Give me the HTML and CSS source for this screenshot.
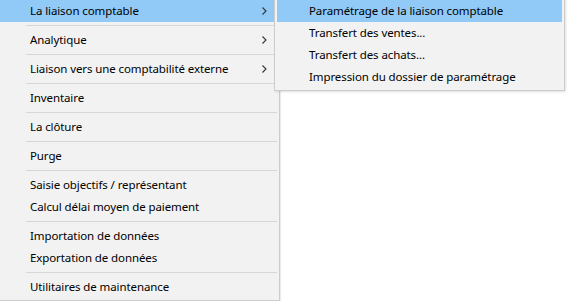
FILE: index.html
```html
<!DOCTYPE html>
<html>

<head>
    <title>Menu</title>
    <link rel="stylesheet" href="styles.css">
</head>

<body>
    <div class="menu-area">
        <ul class="menu main-menu">
            <li class="item active has-sub">La liaison comptable
                <svg class="chevron" width="5" height="8" viewBox="0 0 5 8"><polyline points="0.5,0.5 4,4 0.5,7.5" /></svg>
            </li>
            <li class="sep"></li>
            <li class="item has-sub">Analytique
                <svg class="chevron" width="5" height="8" viewBox="0 0 5 8"><polyline points="0.5,0.5 4,4 0.5,7.5" /></svg>
            </li>
            <li class="sep"></li>
            <li class="item has-sub">Liaison vers une comptabilité externe
                <svg class="chevron" width="5" height="8" viewBox="0 0 5 8"><polyline points="0.5,0.5 4,4 0.5,7.5" /></svg>
            </li>
            <li class="sep"></li>
            <li class="item">Inventaire</li>
            <li class="sep"></li>
            <li class="item">La clôture</li>
            <li class="sep"></li>
            <li class="item">Purge</li>
            <li class="sep"></li>
            <li class="item">Saisie objectifs / représentant</li>
            <li class="item">Calcul délai moyen de paiement</li>
            <li class="sep"></li>
            <li class="item">Importation de données</li>
            <li class="item">Exportation de données</li>
            <li class="sep"></li>
            <li class="item">Utilitaires de maintenance</li>
        </ul>

        <ul class="menu sub-menu">
            <li class="item active">Paramétrage de la liaison comptable</li>
            <li class="item">Transfert des ventes...</li>
            <li class="item">Transfert des achats...</li>
            <li class="item">Impression du dossier de paramétrage</li>
        </ul>
    </div>
</body>

</html>
```

FILE: styles.css
```css
body {
    margin: 0;
    background-color: #fff;
    font-family: "Noto Sans", "Open Sans", sans-serif;
    font-size: 11.5px;
    letter-spacing: -0.1px;
    color: #000;
}

.menu-area {
    position: relative;
}

.menu {
    list-style: none;
    margin: 0;
    background-color: #f2f2f2;
    box-sizing: border-box;
}

.main-menu {
    width: 280px;
    padding: 0 2px 2px 0;
    border-right: 1px solid #cccccc;
    border-bottom: 1px solid #cccccc;
    box-shadow: 1px 1px 1px rgba(0, 0, 0, 0.08);
}

.sub-menu {
    position: absolute;
    left: 274px;
    top: -3px;
    width: 291px;
    padding: 2px;
    border: 1px solid #cccccc;
    box-shadow: 1px 1px 2px rgba(0, 0, 0, 0.12);
}

.item {
    position: relative;
    height: 22px;
    line-height: 21px;
    padding-left: 30px;
    white-space: nowrap;
}

.sub-menu .item {
    padding-left: 32px;
}

.item.active {
    background-color: #91c9f7;
}

.sep {
    height: 1px;
    margin: 3px 0 3px 26px;
    background-color: #d7d7d7;
}

.chevron {
    position: absolute;
    right: 10px;
    top: 7px;
    fill: none;
    stroke: #333;
    stroke-width: 1.1;
}
```
